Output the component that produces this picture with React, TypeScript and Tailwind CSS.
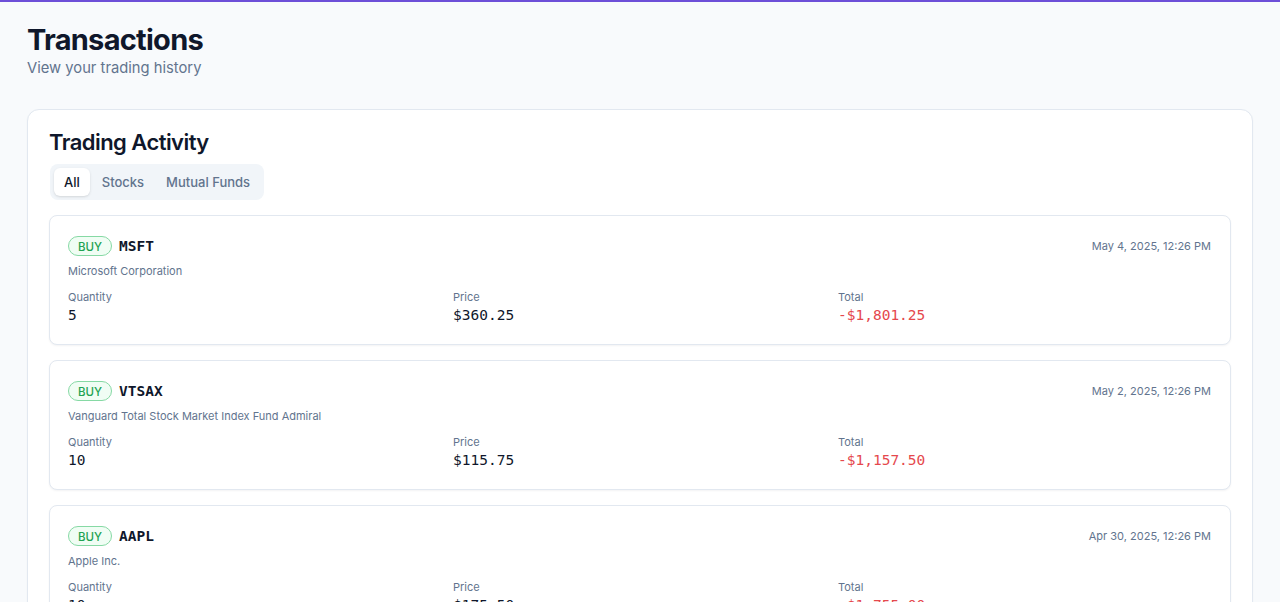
import React from "react";

type Tx = {
  ticker: string;
  name: string;
  date: string;
  qty: string;
  price: string;
  total: string;
};

const txs: Tx[] = [
  {
    ticker: "MSFT",
    name: "Microsoft Corporation",
    date: "May 4, 2025, 12:26 PM",
    qty: "5",
    price: "$360.25",
    total: "-$1,801.25",
  },
  {
    ticker: "VTSAX",
    name: "Vanguard Total Stock Market Index Fund Admiral",
    date: "May 2, 2025, 12:26 PM",
    qty: "10",
    price: "$115.75",
    total: "-$1,157.50",
  },
  {
    ticker: "AAPL",
    name: "Apple Inc.",
    date: "Apr 30, 2025, 12:26 PM",
    qty: "10",
    price: "$175.50",
    total: "-$1,755.00",
  },
];

const mono = "font-['DejaVu_Sans_Mono','Liberation_Mono',monospace]";

function TxCard({ t }: { t: Tx }) {
  return (
    <div className="rounded-lg border border-slate-200 bg-white pl-[18px] pr-[19px] pt-5 pb-[19px] shadow-[0_1px_2px_rgba(15,23,42,0.05)]">
      <div className="flex items-center justify-between h-5">
        <div className="flex items-center gap-[7px]">
          <span className="inline-flex h-5 items-center rounded-full border border-[#86d9a4] bg-[#f0fdf4] px-[9px] pt-[2px] text-[11.5px] font-medium text-[#22a352] leading-4">
            BUY
          </span>
          <span className={`${mono} text-[14.5px] font-bold text-slate-900 leading-5`}>
            {t.ticker}
          </span>
        </div>
        <span className="text-[11px] text-slate-500">{t.date}</span>
      </div>
      <div className="mt-[7px] text-[11px] leading-4 text-slate-500">{t.name}</div>
      <div className="mt-[10px] grid grid-cols-3 gap-3">
        <div>
          <div className="text-[11px] leading-4 text-slate-500">Quantity</div>
          <div className={`${mono} text-[14.5px] leading-5 text-slate-900`}>{t.qty}</div>
        </div>
        <div>
          <div className="text-[11px] leading-4 text-slate-500">Price</div>
          <div className={`${mono} text-[14.5px] leading-5 text-slate-900`}>{t.price}</div>
        </div>
        <div>
          <div className="text-[11px] leading-4 text-slate-500">Total</div>
          <div className={`${mono} text-[14.5px] leading-5 text-[#e5484d]`}>{t.total}</div>
        </div>
      </div>
    </div>
  );
}

export default function App() {
  return (
    <div className="min-h-screen bg-slate-50 border-t-2 border-[#6d4fd8] font-['Inter',sans-serif]">
      <div className="px-[27px] pt-5">
        <h1 className="text-[29px] font-bold leading-9 tracking-tight text-slate-900">
          Transactions
        </h1>
        <p className="text-[14.75px] leading-6 text-slate-500 -mt-[2px]">View your trading history</p>

        <div className="mt-[29px] rounded-xl border border-slate-200 bg-white px-[21px] pt-4 pb-6 shadow-[0_1px_2px_rgba(15,23,42,0.04)]">
          <h2 className="text-[22px] font-semibold leading-8 tracking-tight text-slate-900">
            Trading Activity
          </h2>
          <div className="ml-px mt-[6px] inline-flex h-9 items-center rounded-lg bg-slate-100 p-1">
            <button className="h-7 rounded-md bg-white px-[10px] pt-px text-[13px] font-medium text-slate-900 shadow-sm">
              All
            </button>
            <button className="h-7 rounded-md px-3 pt-px text-[13px] font-medium text-slate-500">
              Stocks
            </button>
            <button className="h-7 rounded-md px-[10px] pt-px text-[13px] font-medium text-slate-500">
              Mutual Funds
            </button>
          </div>
          <div className="mt-[15px] flex flex-col gap-[15px]">
            {txs.map((t) => (
              <TxCard key={t.ticker} t={t} />
            ))}
          </div>
        </div>
      </div>
    </div>
  );
}
